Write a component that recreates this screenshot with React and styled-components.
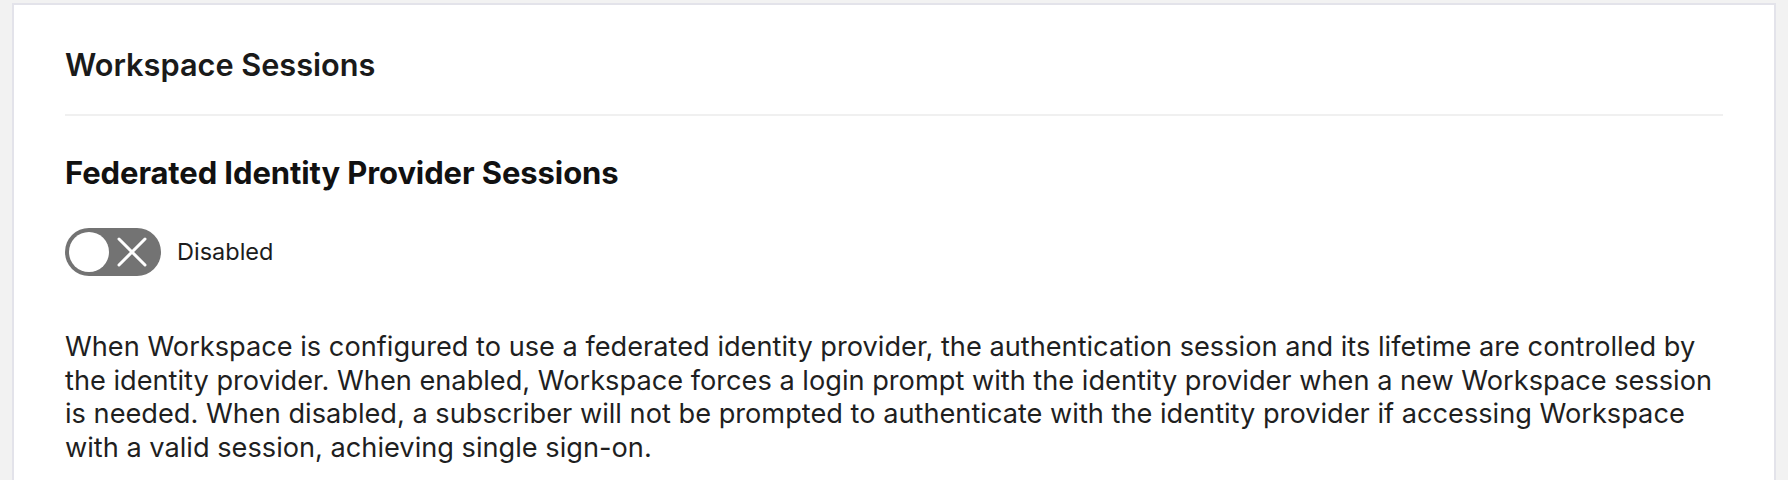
import React from "react";
import styled, { createGlobalStyle } from "styled-components";

const GlobalStyle = createGlobalStyle`
	html, body {
		margin: 0;
		padding: 0;
		background: #f2f2f2;
	}
	body {
		font-family: "Inter", "Liberation Sans", sans-serif;
		color: #1c1c1c;
	}
`;

const Page = styled.div`
	padding: 3px 12px 0 12px;
	height: 477px;
	overflow: hidden;
`;

const Card = styled.section`
	background: #ffffff;
	border: 2px solid #e3e3ea;
	border-bottom: none;
	padding: 42px 51px 40px 51px;
	min-height: 600px;
`;

const PageTitle = styled.h1`
	margin: 0;
	font-family: "Inter", sans-serif;
	font-size: 30.7px;
	font-weight: 600;
	line-height: 36px;
	color: #1a1a1a;
`;

const Divider = styled.hr`
	margin: 31px 0 0 0;
	border: none;
	height: 2px;
	background: #f0f0f0;
`;

const SectionTitle = styled.h2`
	margin: 38px 0 0 0;
	font-family: "Inter", sans-serif;
	font-size: 31px;
	font-weight: 700;
	line-height: 38px;
	letter-spacing: -0.1px;
	color: #111111;
`;

const ToggleRow = styled.label`
	display: flex;
	align-items: center;
	gap: 16px;
	margin-top: 36px;
`;

const Track = styled.span`
	position: relative;
	display: inline-flex;
	align-items: center;
	justify-content: ${(p) => (p.$on ? "flex-start" : "flex-end")};
	width: 96px;
	height: 48px;
	border-radius: 24px;
	background: ${(p) => (p.$on ? "#0f6cbd" : "#737373")};
	padding: 0 14px;
	box-sizing: border-box;
`;

const Knob = styled.span`
	position: absolute;
	top: 4px;
	left: ${(p) => (p.$on ? "52px" : "4px")};
	width: 40px;
	height: 40px;
	border-radius: 50%;
	background: #ffffff;
`;

const ToggleLabel = styled.span`
	font-size: 23.5px;
	line-height: 28px;
	color: #1c1c1c;
`;

const Description = styled.p`
	margin: 54px 0 0 0;
	font-size: 27.2px;
	line-height: 33.5px;
	color: #1f1f1f;
`;

const CrossIcon = () => (
	<svg width="30" height="30" viewBox="0 0 30 30" fill="none">
		<path
			d="M2 2 L28 28 M28 2 L2 28"
			stroke="#ffffff"
			strokeWidth="3"
			strokeLinecap="round"
		/>
	</svg>
);

const Toggle = ({ on, label }) => (
	<ToggleRow>
		<Track $on={on}>
			<Knob $on={on} />
			{!on && <CrossIcon />}
		</Track>
		<ToggleLabel>{label}</ToggleLabel>
	</ToggleRow>
);

const App = () => (
	<>
		<GlobalStyle />
		<Page>
			<Card>
				<PageTitle>Workspace Sessions</PageTitle>
				<Divider />
				<SectionTitle>Federated Identity Provider Sessions</SectionTitle>
				<Toggle on={false} label="Disabled" />
				<Description>
					When Workspace is configured to use a federated identity provider,
					the authentication session and its lifetime are controlled by the
					identity provider. When enabled, Workspace forces a login prompt
					with the identity provider when a new Workspace session is needed.
					When disabled, a subscriber will not be prompted to authenticate
					with the identity provider if accessing Workspace with a valid
					session, achieving single sign-on.
				</Description>
			</Card>
		</Page>
	</>
);

export default App;
